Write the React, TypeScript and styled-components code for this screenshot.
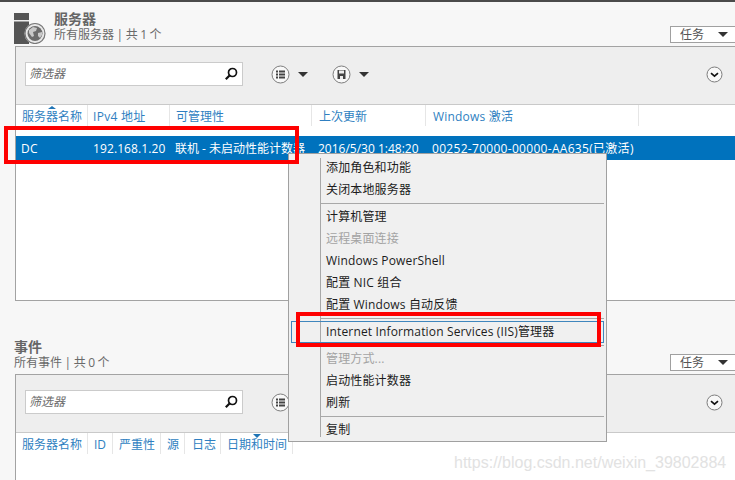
import React from "react";
import styled, { createGlobalStyle } from "styled-components";

const Global = createGlobalStyle`
  html, body { margin: 0; padding: 0; height: 480px; overflow: hidden; background: #f7f7f7; }
  body { font-family: "Open Sans", "Noto Sans CJK SC", sans-serif; font-size: 12px; }
`;
const Page = styled.div`position: relative; width: 735px; height: 480px; overflow: hidden; background: #f7f7f7; border-top: 2px solid #4b4b4b; box-sizing: border-box;`;
const Section = styled.section<{ $top: number }>`margin-top: ${(p) => p.$top}px; padding-left: 15px;`;
const SectionHead = styled.header`display: flex; align-items: flex-end; padding-bottom: 3px; margin-left: -1px;`;
const TitleWrap = styled.div`flex: 1; display: flex; flex-direction: column;`;
const HeadIcon = styled.svg`display: block; width: 32px; height: 31px; margin-right: 8px; margin-bottom: -1px;`;
const Title = styled.div`font-size: 14px; line-height: 16px; font-weight: 700; color: #666;`;
const Sub = styled.div`font-size: 12px; line-height: 16px; color: #6a6a6a; word-spacing: -0.6px; white-space: nowrap;`;
const Tasks = styled.div`box-sizing: border-box; width: 65px; height: 17px; border: 1px solid #a0a0a0; border-right: none; background: #fff; display: flex; align-items: center; justify-content: space-between; padding: 0 7px 0 9px; color: #555; line-height: 15px;`;
const Tri = styled.span`display: block; width: 0; height: 0; border-left: 5px solid transparent; border-right: 5px solid transparent; border-top: 5px solid #333;`;
const Panel = styled.div<{ $height: number }>`box-sizing: border-box; height: ${(p) => p.$height}px; background: #fff; border: 1px solid #a3a3a3; border-right: none;`;
const Toolbar = styled.div`box-sizing: border-box; height: 58px; background: #eee; border-bottom: 1px solid #c9c9c9; display: flex; align-items: center; padding: 0 12px 3px 9px;`;
const Filter = styled.div`box-sizing: border-box; width: 218px; height: 24px; background: #fff; border: 1px solid #cbcbcb; display: flex; align-items: center; justify-content: space-between; padding: 0 3px 0 3px; margin-right: 28px;`;
const Placeholder = styled.span`font-style: italic; color: #6b6b6b; line-height: 20px;`;
const ToolBtn = styled.div`display: flex; align-items: center; gap: 8px; margin-right: 24px;`;
const Spacer = styled.div`flex: 1;`;
const Icon = styled.svg`display: block; flex: none;`;
const HeaderRow = styled.div`display: flex; height: 21px;`;
const HCell = styled.div<{ $w: number; $pl: number; $ls?: number }>`position: relative; box-sizing: border-box; flex: none; width: ${(p) => p.$w}px; padding-left: ${(p) => p.$pl}px; border-right: 1px solid #e6e6e6; color: #2f7fc1; line-height: 23px; white-space: nowrap; letter-spacing: ${(p) => p.$ls ?? 0}px;`;
const SortMark = styled.span<{ $left: number; $up?: boolean }>`position: absolute; top: 1px; left: ${(p) => p.$left}px; width: 0; height: 0; border-left: 4px solid transparent; border-right: 4px solid transparent; ${(p) => (p.$up ? "border-bottom: 3px solid #1f74b5;" : "border-top: 4px solid #1f74b5;")}`;
const DataRow = styled.div`display: flex; height: 24px; margin-top: 10px; background: #0072bd; color: #fff; line-height: 25px;`;
const DCell = styled.div<{ $w: number; $pl: number; $ls?: number }>`box-sizing: border-box; flex: none; width: ${(p) => p.$w}px; padding-left: ${(p) => p.$pl}px; white-space: nowrap; letter-spacing: ${(p) => p.$ls ?? 0}px;`;

const Menu = styled.div`position: absolute; left: 288px; top: 151px; box-sizing: border-box; width: 319px; background: #f0f0f0; border: 1px solid #a0a0a0; padding: 3px 2px 0; height: 289px;
  &::before { content: ""; position: absolute; left: 31px; top: 4px; bottom: 4px; width: 1px; background: #a8a8a8; }`;
const Item = styled.div<{ $off?: boolean }>`position: relative; box-sizing: border-box; height: 22px; line-height: 22px; padding-left: 35px; color: ${(p) => (p.$off ? "#a3a3a3" : "#1c1c1c")}; white-space: nowrap; letter-spacing: .15px;`;
const HotItem = styled(Item)`border: 1px solid #3f86bd; padding-left: 34px; line-height: 19px; letter-spacing: .15px;`;
const Sep = styled.div`height: 5px; margin-left: 30px; display: flex; align-items: center; padding-bottom: 1px; box-sizing: border-box;
  &::after { content: ""; display: block; width: 100%; height: 1px; background: #a8a8a8; }`;
const RedBox = styled.div<{ $x: number; $y: number; $w: number; $h: number }>`position: absolute; box-sizing: border-box; left: ${(p) => p.$x}px; top: ${(p) => p.$y}px; width: ${(p) => p.$w}px; height: ${(p) => p.$h}px; border: 4px solid #fe0000;`;
const Watermark = styled.div`position: absolute; left: 454px; top: 451px; font-family: "Liberation Sans", sans-serif; font-size: 16px; line-height: 20px; color: #e2e2e2; white-space: nowrap;`;

const ServerGlobe = () => (
  <HeadIcon viewBox="0 0 32 31">
    <rect x="0" y="0" width="15" height="31" fill="#555" />
    <rect x="0" y="7" width="15" height="1.5" fill="#eee" />
    <circle cx="21" cy="20.5" r="10.5" fill="#f7f7f7" />
    <circle cx="21" cy="20.5" r="10" fill="#e8e8e8" stroke="#777" strokeWidth="1.2" />
    <circle cx="21" cy="20.5" r="7.5" fill="#6c6c6c" />
    <path d="M15 17l4-3 4 1-1 3-3 1 1 4-2 1-3-4zM24 20l4-1v3l-2 3-2-2z" fill="#c9c9c9" />
  </HeadIcon>
);
const Search = () => (
  <Icon width="16" height="16" viewBox="0 0 16 16">
    <circle cx="9.5" cy="6.5" r="4" fill="none" stroke="#111" strokeWidth="1.7" />
    <path d="M6.5 9.5L2.8 13.2" stroke="#111" strokeWidth="2.2" />
  </Icon>
);
const ListCircle = () => (
  <Icon width="19" height="19" viewBox="0 0 19 19">
    <circle cx="9.5" cy="9.5" r="8.5" fill="#f8f8f8" stroke="#7d7d7d" />
    <path d="M5 6h2v2H5zM8 6h6v2H8zM5 9h2v2H5zM8 9h6v2H8zM5 12h2v2H5zM8 12h6v2H8z" fill="#444" transform="translate(0 -.5)" />
  </Icon>
);
const SaveCircle = () => (
  <Icon width="19" height="19" viewBox="0 0 19 19">
    <circle cx="9.5" cy="9.5" r="8.5" fill="#f8f8f8" stroke="#7d7d7d" />
    <path d="M5.5 5h8v9h-8z" fill="#444" />
    <path d="M7 5.5h5v3H7z" fill="#eee" />
    <path d="M8 11h3v3H8z" fill="#eee" />
  </Icon>
);
const Chevron = () => (
  <Icon width="17" height="17" viewBox="0 0 17 17">
    <circle cx="8.5" cy="8.5" r="7.5" fill="#f8f8f8" stroke="#7d7d7d" />
    <path d="M5 7.2l3.5 3 3.5-3" fill="none" stroke="#111" strokeWidth="1.7" />
  </Icon>
);

const Bar = () => (
  <Filter>
    <Placeholder>筛选器</Placeholder>
    <Search />
  </Filter>
);

export default function App() {
  return (
    <Page>
      <Global />
      <Section $top={9}>
        <SectionHead>
          <ServerGlobe />
          <TitleWrap>
            <Title>服务器</Title>
            <Sub>所有服务器 | 共 1 个</Sub>
          </TitleWrap>
          <Tasks>任务<Tri /></Tasks>
        </SectionHead>
        <Panel $height={255}>
          <Toolbar>
            <Bar />
            <ToolBtn><ListCircle /><Tri /></ToolBtn>
            <ToolBtn><SaveCircle /><Tri /></ToolBtn>
            <Spacer />
            <Chevron />
          </Toolbar>
          <HeaderRow>
            <HCell $w={72} $pl={6}>服务器名称<SortMark $left={32} $up /></HCell>
            <HCell $w={82} $pl={5} $ls={0.3}>IPv4 地址</HCell>
            <HCell $w={142} $pl={6}>可管理性</HCell>
            <HCell $w={114} $pl={7}>上次更新</HCell>
            <HCell $w={213} $pl={7} $ls={0.2}>Windows 激活</HCell>
          </HeaderRow>
          <DataRow>
            <DCell $w={72} $pl={5} $ls={0.3}>DC</DCell>
            <DCell $w={82} $pl={5} $ls={0.1}>192.168.1.20</DCell>
            <DCell $w={142} $pl={5}>联机 - 未启动性能计数器</DCell>
            <DCell $w={114} $pl={6}>2016/5/30 1:48:20</DCell>
            <DCell $w={213} $pl={6} $ls={0.3}>00252-70000-00000-AA635(已激活)</DCell>
          </DataRow>
        </Panel>
      </Section>
      <Section $top={38}>
        <SectionHead>
          <TitleWrap>
            <Title>事件</Title>
            <Sub>所有事件 | 共 0 个</Sub>
          </TitleWrap>
          <Tasks>任务<Tri /></Tasks>
        </SectionHead>
        <Panel $height={140}>
          <Toolbar>
            <Bar />
            <ToolBtn><ListCircle /><Tri /></ToolBtn>
            <ToolBtn><SaveCircle /><Tri /></ToolBtn>
            <Spacer />
            <Chevron />
          </Toolbar>
          <HeaderRow>
            <HCell $w={72} $pl={6}>服务器名称</HCell>
            <HCell $w={25} $pl={6}>ID</HCell>
            <HCell $w={48} $pl={6}>严重性</HCell>
            <HCell $w={24} $pl={6}>源</HCell>
            <HCell $w={36} $pl={7}>日志</HCell>
            <HCell $w={72} $pl={6}>日期和时间<SortMark $left={32} /></HCell>
          </HeaderRow>
        </Panel>
      </Section>
      <Menu>
        <Item>添加角色和功能</Item>
        <Item>关闭本地服务器</Item>
        <Sep />
        <Item>计算机管理</Item>
        <Item $off>远程桌面连接</Item>
        <Item>Windows PowerShell</Item>
        <Item>配置 NIC 组合</Item>
        <Item>配置 Windows 自动反馈</Item>
        <Sep />
        <HotItem>Internet Information Services (IIS)管理器</HotItem>
        <Sep />
        <Item $off>管理方式...</Item>
        <Item>启动性能计数器</Item>
        <Item>刷新</Item>
        <Sep />
        <Item>复制</Item>
      </Menu>
      <RedBox $x={4} $y={124} $w={295} $h={38} />
      <RedBox $x={296} $y={310} $w={305} $h={35} />
      <Watermark>https://blog.csdn.net/weixin_39802884</Watermark>
    </Page>
  );
}
